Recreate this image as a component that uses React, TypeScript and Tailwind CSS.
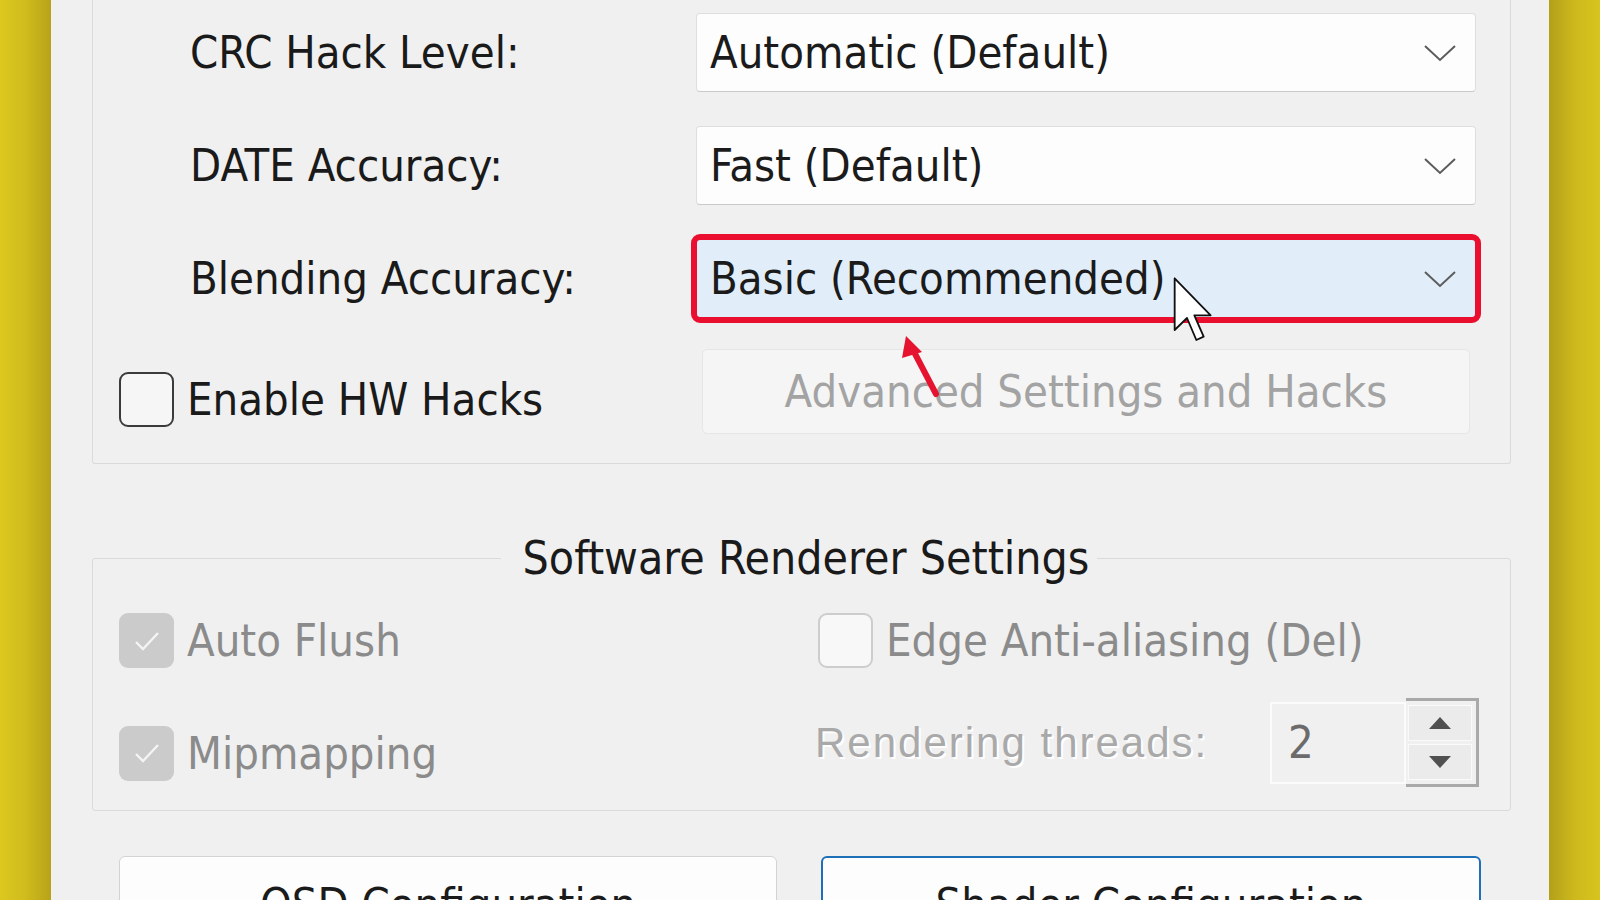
const ui = { fontFamily: '"DejaVu Sans", "Noto Sans", sans-serif', fontStretch: "condensed" } as const;

const Chevron = () => (
  <svg width="34" height="18" viewBox="0 0 34 18">
    <path d="M2 2 L17 16 L32 2" fill="none" stroke="#5c5c5c" strokeWidth="2" />
  </svg>
);

const Combo = ({ value, hot }: { value: string; hot?: boolean }) => {
  return (
    <div
      className={
        "flex-1 h-[79px] mr-[34px] flex items-center justify-between pl-[13px] pr-[18px] rounded-[4px] border " +
        (hot
          ? "bg-[#e1eefa] border-[#cfdbe8] outline-[6px] outline-solid outline-[#ea0f2f] outline-offset-[-1px] rounded-[3px]"
          : "bg-[#fdfdfd] border-[#dedede] border-b-[#c9c9c9]")
      }
    >
      <span className="text-[45px] text-[#1b1b1b] leading-none">{value}</span>
      <Chevron />
    </div>
  );
};

const Box = ({ kind }: { kind: "empty" | "dark" | "checked" }) => {
  if (kind === "checked") {
    return (
      <div className="w-[55px] h-[55px] shrink-0 rounded-[9px] bg-[#cbcbcb] flex items-center justify-center">
        <svg width="30" height="24" viewBox="0 0 30 24">
          <path d="M4 13 L11 20 L26 4" fill="none" stroke="#f4f4f4" strokeWidth="2.4" />
        </svg>
      </div>
    );
  }
  return (
    <div
      className={
        "w-[55px] h-[55px] shrink-0 rounded-[9px] " +
        (kind === "dark" ? "border-[2px] border-[#3b3b3b] bg-[#f6f6f6]" : "border-[2px] border-[#cdcdcd] bg-[#f8f8f8]")
      }
    />
  );
};

const Label = ({ children }: { children: string }) => (
  <div className="w-[603px] shrink-0 pl-[97px]">
    <span className="text-[45px] text-[#1a1a1a] leading-none">{children}</span>
  </div>
);

export default function App() {
  return (
    <div className="w-[1600px] h-[900px] overflow-hidden flex relative" style={ui}>
      <div className="w-[51px] shrink-0 bg-linear-to-r from-[#dcc81f] via-[#d0bc1c] to-[#b7a319]" />

      <div className="flex-1 bg-[#f0f0f0] pl-[41px] pr-[38px]">
        {/* hardware group, top edge is scrolled out */}
        <div className="border-x border-b border-[#dadada] rounded-b-[3px] pt-[12px] pb-[29px] flex flex-col gap-[32px]">
          <div className="flex items-center h-[81px]">
            <Label>CRC Hack Level:</Label>
            <Combo value="Automatic (Default)" />
          </div>
          <div className="flex items-center h-[81px]">
            <Label>DATE Accuracy:</Label>
            <Combo value="Fast (Default)" />
          </div>
          <div className="flex items-center h-[81px]">
            <Label>Blending Accuracy:</Label>
            <Combo value="Basic (Recommended)" hot />
          </div>
          <div className="flex items-center h-[85px] -mt-[2px]">
            <div className="w-[609px] shrink-0 pl-[26px] pt-[15px] flex items-center gap-[13px]">
              <Box kind="dark" />
              <span className="text-[45px] text-[#1a1a1a] leading-none">Enable HW Hacks</span>
            </div>
            <div className="flex-1 mr-[40px] h-[85px] rounded-[5px] bg-[#f5f5f5] border border-[#e6e6e6] flex items-center justify-center">
              <span className="text-[45px] text-[#a3a3a3] leading-none">Advanced Settings and Hacks</span>
            </div>
          </div>
        </div>

        <fieldset className="mt-[68px] border border-[#dadada] rounded-[3px] pt-[29px] pb-[23px] pl-[26px] pr-[31px] grid grid-cols-[699px_1fr]">
          <legend className="mx-auto pl-[22px] pr-[8px] text-[46px] leading-[52px] text-[#1a1a1a]">Software Renderer Settings</legend>
          <div className="flex flex-col gap-[57px]">
            <div className="flex items-center gap-[13px] h-[55px]">
              <Box kind="checked" />
              <span className="text-[45px] text-[#8b8b8b] leading-none">Auto Flush</span>
            </div>
            <div className="flex items-center gap-[13px] h-[56px]">
              <Box kind="checked" />
              <span className="text-[45px] text-[#8b8b8b] leading-none">Mipmapping</span>
            </div>
          </div>
          <div className="flex flex-col">
            <div className="flex items-center gap-[13px] h-[55px]">
              <Box kind="empty" />
              <span className="text-[45px] text-[#8b8b8b] leading-none">Edge Anti-aliasing (Del)</span>
            </div>
            <div className="mt-[30px] flex items-center justify-between h-[89px] -ml-[3px]">
              <span
                className="text-[42px] tracking-[2px] text-[#a9a9a9] leading-none [text-shadow:2px_2px_0_#ffffff]"
                style={{ fontFamily: '"Liberation Sans", Arial, sans-serif', fontStretch: "normal" }}
              >
                Rendering threads:
              </span>
              <div className="flex items-center">
                <div className="w-[136px] h-[82px] border-[2px] border-[#fbfbfb] bg-[#f0f0f0] flex items-center pl-[16px]">
                  <span className="text-[45px] text-[#6b6b6b] leading-none">2</span>
                </div>
                <div className="w-[73px] h-[89px] border-[3px] border-l-0 border-[#a9a9a9] flex flex-col gap-[3px] p-[4px] pl-[2px]">
                  <div className="flex-1 bg-[#ebebeb] border border-[#fafafa] flex items-center justify-center">
                    <svg width="24" height="14" viewBox="0 0 24 14"><path d="M12 1 L23 13 L1 13 Z" fill="#505050" /></svg>
                  </div>
                  <div className="flex-1 bg-[#ebebeb] border border-[#fafafa] flex items-center justify-center">
                    <svg width="24" height="14" viewBox="0 0 24 14"><path d="M1 1 L23 1 L12 13 Z" fill="#505050" /></svg>
                  </div>
                </div>
              </div>
            </div>
          </div>
        </fieldset>

        <div className="mt-[45px] pl-[27px] pr-[30px] flex gap-[44px]">
          <div className="w-[658px] h-[90px] shrink-0 bg-[#fdfdfd] border border-[#d3d3d3] rounded-[6px] flex items-center justify-center pt-[6px]">
            <span className="text-[45px] text-[#1b1b1b] leading-none">OSD Configuration</span>
          </div>
          <div className="flex-1 h-[90px] bg-[#fdfdfd] border-[2px] border-[#1d6fb8] rounded-[6px] flex items-center justify-center pt-[6px]">
            <span className="text-[45px] text-[#1b1b1b] leading-none">Shader Configuration</span>
          </div>
        </div>
      </div>

      <div className="w-[51px] shrink-0 bg-linear-to-r from-[#b3a01a] via-[#cdb91c] to-[#d8c41e]" />

      {/* mouse pointer */}
      <svg className="absolute left-[1173px] top-[276px]" width="40" height="68" viewBox="0 0 12 20">
        <path d="M0.5 0.5 L0.5 16 L4.2 12.4 L7 19 L9.2 18 L6.4 11.6 L11.3 11.6 Z" fill="#ffffff" stroke="#111111" strokeWidth="0.55" strokeLinejoin="round" />
      </svg>

      {/* red annotation arrow */}
      <svg className="absolute left-[890px] top-[330px]" width="60" height="70" viewBox="0 0 60 70">
        <path d="M46 64 L22 18" stroke="#e5132f" strokeWidth="6" strokeLinecap="round" />
        <path d="M16 6 L32 22 L12 28 Z" fill="#e5132f" />
      </svg>
    </div>
  );
}
